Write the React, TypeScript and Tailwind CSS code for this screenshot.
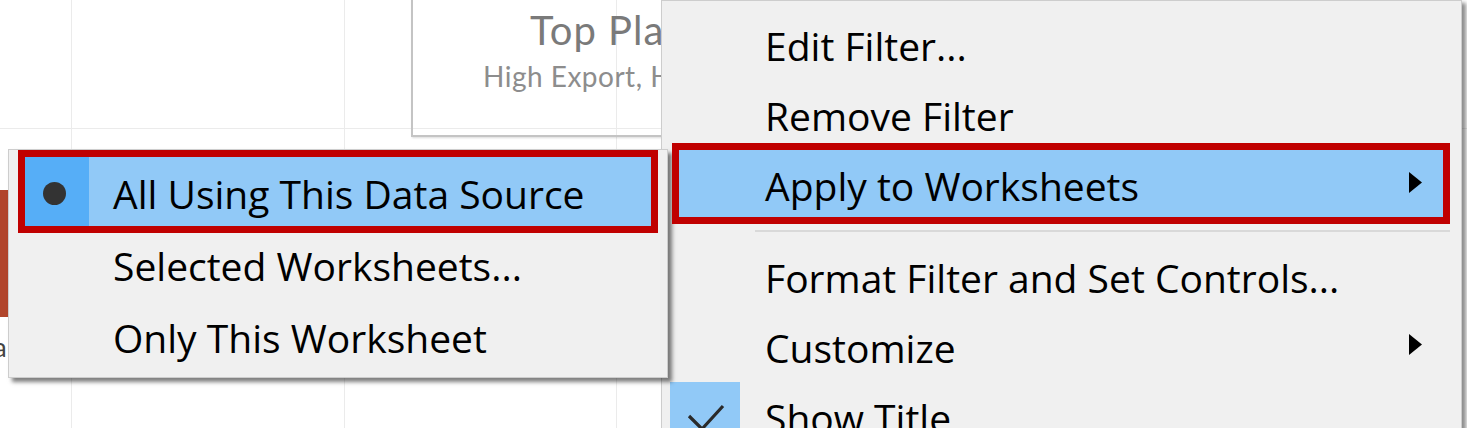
import React from "react";

const MENU_FONT = { fontFamily: '"Open Sans", "Noto Sans", sans-serif' };
const CHART_FONT = { fontFamily: "Lato, sans-serif" };

function Arrow() {
  return (
    <svg width="13" height="21" viewBox="0 0 13 21" className="block">
      <polygon points="0,0 13,10.5 0,21" fill="#000" />
    </svg>
  );
}

function MainRow({
  label,
  highlighted,
  arrow,
  checked,
}: {
  label: string;
  highlighted?: boolean;
  arrow?: boolean;
  checked?: boolean;
}) {
  return (
    <div
      className={
        "ml-[14px] mr-[15px] flex h-[70px] items-center " +
        (highlighted ? "bg-[#91c9f7]" : "")
      }
    >
      <div className="flex h-full w-[89px] shrink-0 items-center">
        {checked && (
          <div className="-ml-[6px] h-[70px] w-[70px] self-start bg-[#91c9f7]">
            <svg width="70" height="70" viewBox="0 0 70 70" className="block">
              <polyline
                points="19,34 32,47 53,24"
                fill="none"
                stroke="#2a2a2a"
                strokeWidth="3.2"
              />
            </svg>
          </div>
        )}
      </div>
      <span className="whitespace-nowrap text-[39px] leading-none text-black">{label}</span>
      {arrow && (
        <div className="ml-auto mr-[24px] mt-[-6px]">
          <Arrow />
        </div>
      )}
    </div>
  );
}

function SubRow({ label, selected }: { label: string; selected?: boolean }) {
  return (
    <div
      className={
        "ml-[11px] mr-[12px] flex h-[72px] items-center " +
        (selected ? "bg-[#91c9f7]" : "")
      }
    >
      <div
        className={
          "flex h-full w-[69px] shrink-0 items-center justify-center " +
          (selected ? "bg-[#56aef7]" : "")
        }
      >
        {selected && <div className="h-[23px] w-[23px] rounded-full bg-[#333333]" />}
      </div>
      <span className="ml-[24px] whitespace-nowrap text-[39px] leading-none text-black">
        {label}
      </span>
    </div>
  );
}

export default function App() {
  return (
    <div className="relative h-[428px] w-[1467px] overflow-hidden bg-white">
      {/* chart area: grid of cells whose borders are the gridlines */}
      <div className="grid h-full grid-cols-[72px_273px_272px_1fr] grid-rows-[129px_1fr]" style={CHART_FONT}>
        <div className="border-b border-r border-[#ebebeb]" />
        <div className="border-b border-r border-[#ebebeb]" />
        <div className="border-b border-r border-[#ebebeb]" />
        <div className="border-b border-[#ebebeb]" />
        <div className="flex flex-col border-r border-[#ebebeb] pt-[61px]">
          <div className="h-[127px] w-[14px] bg-[#b1452b]" />
          <div className="ml-[-20px] mt-[17px] whitespace-nowrap text-[26px] leading-none text-[#444]">
            ea
          </div>
        </div>
        <div className="border-r border-[#ebebeb]" />
        <div className="border-r border-[#ebebeb]" />
        <div />
      </div>

      {/* dashboard title card floating over the chart */}
      <div
        className="absolute left-[411px] top-[-10px] flex h-[147px] w-[420px] flex-col gap-[12px] border-2 border-[#c4c4c4] pt-[18px] shadow-[1px_1px_2px_rgba(0,0,0,0.15)]"
        style={CHART_FONT}
      >
        <div className="ml-[117px] h-[40px] whitespace-nowrap text-[40px] leading-[40px] tracking-[1px] text-[#7a7a7a]">
          Top Places
        </div>
        <div className="ml-[70px] h-[28px] whitespace-nowrap text-[28px] leading-[28px] tracking-[0.5px] text-[#8d8d8d]">
          High Export, High Import
        </div>
      </div>

      {/* main context menu */}
      <div
        className="absolute left-[661px] top-0 flex h-[480px] w-[801px] flex-col border border-[#cdcdcd] bg-[#f0f0f0] pt-[9px] shadow-[4px_3px_4px_rgba(0,0,0,0.45)]"
        style={MENU_FONT}
      >
        <MainRow label="Edit Filter..." />
        <MainRow label="Remove Filter" />
        <MainRow label="Apply to Worksheets" highlighted arrow />
        <div className="flex h-[22px] items-center">
          <div className="ml-[93px] mr-[11px] h-[2px] flex-1 bg-[#d9d9d9]" />
        </div>
        <MainRow label="Format Filter and Set Controls..." />
        <MainRow label="Customize" arrow />
        <MainRow label="Show Title" checked />
      </div>

      {/* sub menu */}
      <div
        className="absolute left-[8px] top-[149px] flex h-[229px] w-[660px] flex-col border border-[#cdcdcd] bg-[#f0f0f0] pt-[7px] shadow-[4px_4px_4px_rgba(0,0,0,0.5)]"
        style={MENU_FONT}
      >
        <SubRow label="All Using This Data Source" selected />
        <SubRow label="Selected Worksheets..." />
        <SubRow label="Only This Worksheet" />
      </div>

      {/* red annotation boxes drawn over the menus */}
      <div className="absolute left-[18px] top-[150px] h-[83px] w-[640px] border-[7px] border-[#c00000]" />
      <div className="absolute left-[672px] top-[143px] h-[81px] w-[778px] border-[7px] border-[#c00000]" />
    </div>
  );
}
